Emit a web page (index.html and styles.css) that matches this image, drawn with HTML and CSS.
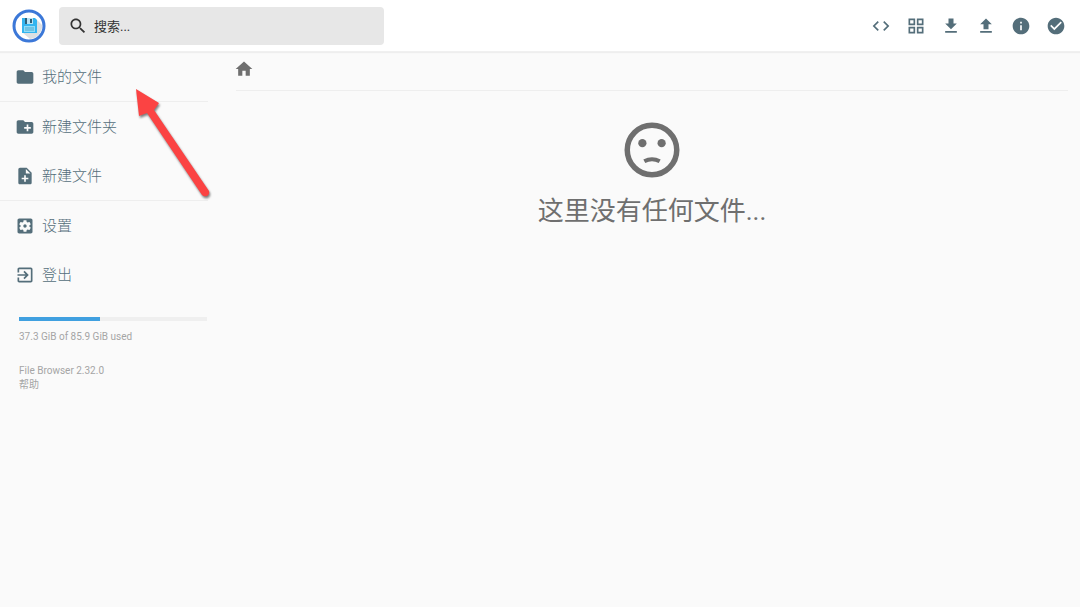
FILE: index.html
```html
<!DOCTYPE html>
<html lang="zh-CN">

<head>
    <meta charset="UTF-8">
    <meta name="viewport" content="width=device-width, initial-scale=1.0">
    <title>File Browser</title>
    <link rel="stylesheet" href="styles.css">
</head>

<body>
    <header class="header">
        <svg class="logo" viewBox="0 0 34 34">
            <circle cx="17" cy="17" r="15" fill="#fff" stroke="#3c78d8" stroke-width="3" />
            <path d="M24 10l6 6a13 13 0 0 1-12 14l-7-6z" fill="#dcdfe2" />
            <path d="M10 9h13l2 2v13H10z" fill="#33b5f0" />
            <path d="M13 9h8v6h-8z" fill="#b9e3f5" />
            <path d="M13 9h2v6h-2zM18 10h2v4h-2z" fill="#2d5f78" />
            <path d="M12 17h11v6H12z" fill="#8fdcf8" />
            <path d="M13 19h9M13 21h9" stroke="#4fa9cf" stroke-width="1" />
        </svg>
        <label class="search">
            <svg class="icon" viewBox="0 0 24 24"><path d="M15.5 14h-.79l-.28-.27C15.41 12.59 16 11.11 16 9.5 16 5.91 13.09 3 9.5 3S3 5.91 3 9.5 5.91 16 9.5 16c1.61 0 3.09-.59 4.23-1.57l.27.28v.79l5 4.99L20.49 19l-4.99-5zm-6 0C7.01 14 5 11.99 5 9.5S7.01 5 9.5 5 14 7.01 14 9.5 11.99 14 9.5 14z" /></svg>
            <input type="text" placeholder="搜索..." aria-label="搜索">
        </label>
        <div class="actions">
            <button type="button" aria-label="命令行"><svg class="icon" viewBox="0 0 24 24"><path d="M9.4 16.6L4.8 12l4.6-4.6L8 6l-6 6 6 6 1.4-1.4zm5.2 0l4.6-4.6-4.6-4.6L16 6l6 6-6 6-1.4-1.4z" /></svg></button>
            <button type="button" aria-label="切换显示方式"><svg class="icon" viewBox="0 0 24 24"><path d="M3 3v8h8V3H3zm6 6H5V5h4v4zm-6 4v8h8v-8H3zm6 6H5v-4h4v4zm4-16v8h8V3h-8zm6 6h-4V5h4v4zm-6 4v8h8v-8h-8zm6 6h-4v-4h4v4z" /></svg></button>
            <button type="button" aria-label="下载"><svg class="icon" viewBox="0 0 24 24"><path d="M19 9h-4V3H9v6H5l7 7 7-7zM5 18v2h14v-2H5z" /></svg></button>
            <button type="button" aria-label="上传"><svg class="icon" viewBox="0 0 24 24"><path d="M9 16h6v-6h4l-7-7-7 7h4zm-4 2h14v2H5z" /></svg></button>
            <button type="button" aria-label="信息"><svg class="icon" viewBox="0 0 24 24"><path d="M12 2C6.48 2 2 6.48 2 12s4.48 10 10 10 10-4.48 10-10S17.52 2 12 2zm1 15h-2v-6h2v6zm0-8h-2V7h2v2z" /></svg></button>
            <button type="button" aria-label="选择多个"><svg class="icon" viewBox="0 0 24 24"><path d="M12 2C6.48 2 2 6.48 2 12s4.48 10 10 10 10-4.48 10-10S17.52 2 12 2zm-2 15l-5-5 1.41-1.41L10 14.17l7.59-7.59L19 8l-9 9z" /></svg></button>
        </div>
    </header>

    <div class="layout">
        <nav class="sidebar">
            <div class="group">
                <button type="button" class="action">
                    <svg class="icon" viewBox="0 0 24 24"><path d="M10 4H4c-1.1 0-1.99.9-1.99 2L2 18c0 1.1.9 2 2 2h16c1.1 0 2-.9 2-2V8c0-1.1-.9-2-2-2h-8l-2-2z" /></svg>
                    <span>我的文件</span>
                </button>
            </div>
            <div class="group">
                <button type="button" class="action">
                    <svg class="icon" viewBox="0 0 24 24"><path d="M20 6h-8l-2-2H4c-1.11 0-1.99.89-1.99 2L2 18c0 1.11.89 2 2 2h16c1.11 0 2-.89 2-2V8c0-1.11-.89-2-2-2zm-1 8h-3v3h-2v-3h-3v-2h3V9h2v3h3v2z" /></svg>
                    <span>新建文件夹</span>
                </button>
                <button type="button" class="action">
                    <svg class="icon" viewBox="0 0 24 24"><path d="M14 2H6c-1.1 0-1.99.9-1.99 2L4 20c0 1.1.89 2 1.99 2H18c1.1 0 2-.9 2-2V8l-6-6zm2 14h-3v3h-2v-3H8v-2h3v-3h2v3h3v2zm-3-7V3.5L18.5 9H13z" /></svg>
                    <span>新建文件</span>
                </button>
            </div>
            <div class="group">
                <button type="button" class="action">
                    <svg class="icon" viewBox="0 0 24 24"><path d="M12 10c-1.1 0-2 .9-2 2s.9 2 2 2 2-.9 2-2-.9-2-2-2zm7-7H5c-1.11 0-2 .9-2 2v14c0 1.1.89 2 2 2h14c1.11 0 2-.9 2-2V5c0-1.1-.89-2-2-2zm-1.75 9c0 .23-.02.46-.05.68l1.48 1.16c.13.11.17.3.08.45l-1.4 2.42c-.09.15-.27.21-.43.15l-1.74-.7c-.36.28-.76.51-1.18.69l-.26 1.85c-.03.17-.18.3-.35.3h-2.8c-.17 0-.32-.13-.35-.29l-.26-1.85c-.43-.18-.82-.41-1.18-.69l-1.74.7c-.16.06-.34 0-.43-.15l-1.4-2.42c-.09-.15-.05-.34.08-.45l1.48-1.16c-.03-.23-.05-.46-.05-.69s.02-.46.05-.68l-1.48-1.16c-.13-.11-.17-.3-.08-.45l1.4-2.42c.09-.15.27-.21.43-.15l1.74.7c.36-.28.76-.51 1.18-.69l.26-1.85c.03-.17.18-.3.35-.3h2.8c.17 0 .32.13.35.29l.26 1.85c.43.18.82.41 1.18.69l1.74-.7c.16-.06.34 0 .43.15l1.4 2.42c.09.15.05.34-.08.45l-1.48 1.16c.03.23.05.46.05.69z" /></svg>
                    <span>设置</span>
                </button>
                <button type="button" class="action">
                    <svg class="icon" viewBox="0 0 24 24"><path d="M10.09 15.59L11.5 17l5-5-5-5-1.41 1.41L12.67 11H3v2h9.67l-2.58 2.59zM19 3H5c-1.11 0-2 .9-2 2v4h2V5h14v14H5v-4H3v4c0 1.1.89 2 2 2h14c1.1 0 2-.9 2-2V5c0-1.1-.9-2-2-2z" /></svg>
                    <span>登出</span>
                </button>
            </div>
            <div class="credits">
                <div class="bar"><div class="used" style="width: 43%"></div></div>
                <p class="usage">37.3 GiB of 85.9 GiB used</p>
                <p>File Browser 2.32.0</p>
                <p><a href="#">帮助</a></p>
            </div>
            <!-- pointer to "my files" -->
            <svg class="arrow" viewBox="0 0 84 120">
                <path d="M6 5L29 19 24 26 79 107Q80 110 77 112 74 113 72 111L17 29 9 32Z" />
            </svg>
        </nav>

        <main class="main">
            <div class="breadcrumbs">
                <a href="#" aria-label="主页"><svg class="icon" viewBox="0 0 24 24"><path d="M10 20v-6h4v6h5v-8h3L12 3 2 12h3v8z" /></svg></a>
            </div>
            <h2 class="message">
                <svg class="face" viewBox="0 0 24 24">
                    <circle cx="12" cy="12" r="9" fill="none" stroke="currentColor" stroke-width="2" />
                    <circle cx="8.5" cy="9.5" r="1.5" fill="currentColor" />
                    <circle cx="15.5" cy="9.5" r="1.5" fill="currentColor" />
                    <path d="M9.2 16.1Q12 14.6 14.8 16.1" fill="none" stroke="currentColor" stroke-width="1.5" />
                </svg>
                <span>这里没有任何文件...</span>
            </h2>
        </main>
    </div>
</body>

</html>
```
FILE: styles.css
```css
* {
    margin: 0;
    padding: 0;
    box-sizing: border-box;
}

body {
    font-family: Roboto, "Noto Sans CJK SC", sans-serif;
    background: #fafafa;
    color: #6f6f6f;
}

button {
    border: 0;
    background: transparent;
    font: inherit;
    color: inherit;
    cursor: pointer;
}

a {
    color: inherit;
    text-decoration: none;
}

.icon {
    display: block;
    width: 20px;
    height: 20px;
    fill: currentColor;
}

.header {
    display: flex;
    align-items: center;
    height: 52px;
    padding: 0 7px 0 12px;
    background: #fff;
    box-shadow: 0 1px 1px #eee, inset 0 -1px #f0f0f0;
}

.logo {
    width: 34px;
    height: 34px;
    margin-right: 13px;
}

.search {
    display: flex;
    align-items: center;
    gap: 6px;
    flex: 0 1 325px;
    height: 38px;
    padding: 0 9px;
    background: #e7e7e7;
    border-radius: 4px;
    color: #333;
}

.search input {
    flex: 1;
    min-width: 0;
    border: 0;
    outline: 0;
    background: transparent;
    font: inherit;
    font-size: 13px;
}

.search input::placeholder {
    color: #333;
    opacity: 1;
}

.actions {
    display: flex;
    margin-left: auto;
    color: #546e7a;
}

.actions button {
    display: flex;
    justify-content: center;
    width: 35px;
    padding: 8px 0;
}

.layout {
    display: flex;
}

.sidebar {
    position: relative;
    flex: none;
    width: 208px;
}

.group + .group {
    border-top: 1px solid #eee;
}

.action {
    display: flex;
    align-items: center;
    gap: 7px;
    width: 100%;
    height: 49px;
    padding: 0 15px;
    font-size: 15px;
    font-weight: 300;
    line-height: 20px;
    color: #546e7a;
}

.credits {
    padding: 18px 1px 0 19px;
    font-size: 10px;
    line-height: 14px;
    color: #a5a5a5;
}

.bar {
    height: 4px;
    background: #efefef;
}

.used {
    height: 100%;
    background: #40a0e0;
}

.usage {
    margin: 9px 0 20px;
}

.arrow {
    position: absolute;
    top: 32px;
    left: 130px;
    width: 84px;
    height: 120px;
    fill: #fb4343;
    filter: drop-shadow(1px 2px 1px rgba(0, 0, 0, .5));
    pointer-events: none;
}

.main {
    flex: 1;
    padding: 0 12px 0 28px;
}

.breadcrumbs {
    display: flex;
    padding: 7px 0 11px;
    border-bottom: 1px solid #eee;
}

.breadcrumbs .icon {
    margin-left: -2px;
}

.message {
    display: flex;
    flex-direction: column;
    align-items: center;
    padding-top: 26px;
    font-size: 26px;
    font-weight: 400;
    line-height: 36px;
}

.face {
    width: 66px;
    height: 66px;
    margin-bottom: 10px;
}
```
